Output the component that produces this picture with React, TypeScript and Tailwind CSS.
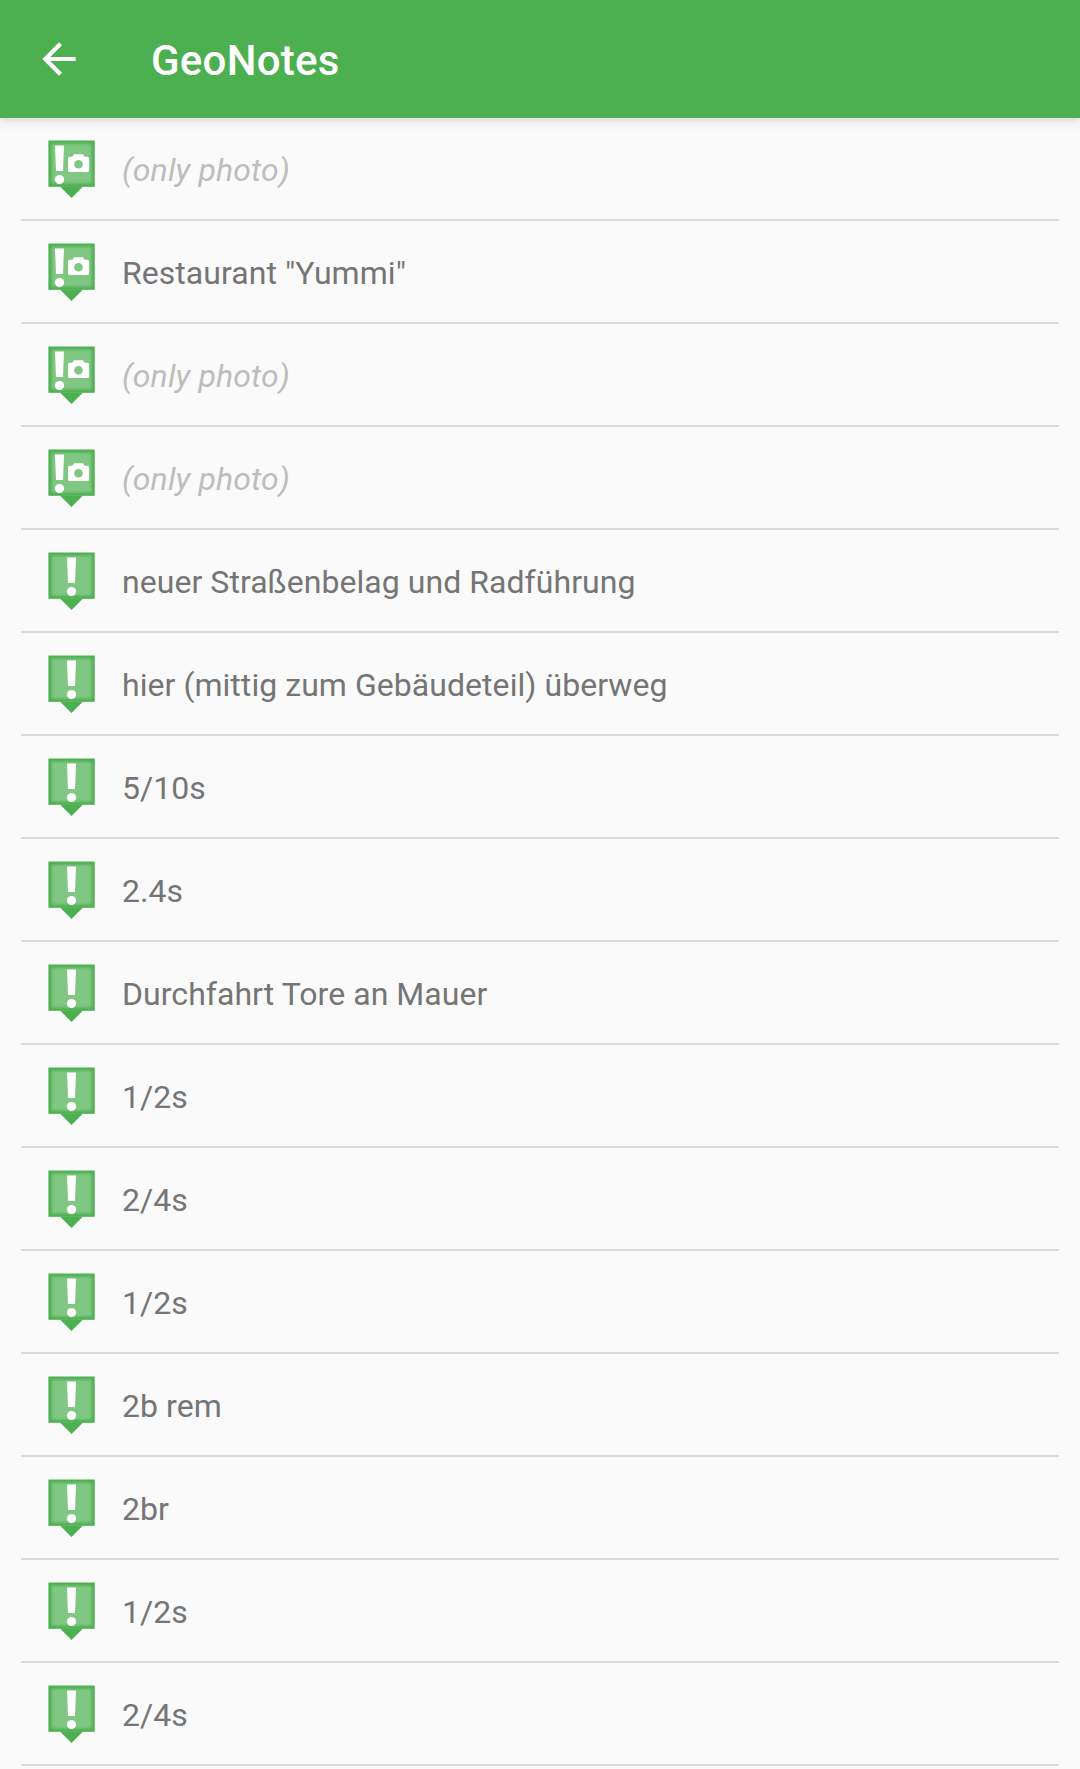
const notes: string[] = [
  "",
  'Restaurant "Yummi"',
  "",
  "",
  "neuer Straßenbelag und Radführung",
  "hier (mittig zum Gebäudeteil) überweg",
  "5/10s",
  "2.4s",
  "Durchfahrt Tore an Mauer",
  "1/2s",
  "2/4s",
  "1/2s",
  "2b rem",
  "2br",
  "1/2s",
  "2/4s",
];

const photoRows = new Set([0, 1, 2, 3]);

function Marker({ photo }: { photo: boolean }) {
  return (
    <svg width="48" height="60" viewBox="0 0 48 60" className="shrink-0">
      <defs>
        <filter id="soft" x="-20%" y="-20%" width="140%" height="140%">
          <feGaussianBlur stdDeviation="1.8" />
        </filter>
        <clipPath id="box">
          <rect x="0.4" y="0.5" width="46.3" height="46.3" />
        </clipPath>
      </defs>
      <rect x="0.4" y="0.5" width="46.3" height="46.3" fill="#4caf50" />
      <path d="M12 46.5H35L23.5 58Z" fill="#4caf50" />
      <g clipPath="url(#box)">
        <rect x="3.6" y="3.6" width="40" height="40" fill="#81c784" filter="url(#soft)" />
      </g>
      <g transform={photo ? "translate(-12 0)" : undefined} fill="#fff">
        <path d="M19 5.4H28L27 31H20Z" />
        <circle cx="23.5" cy="39.5" r="4.6" />
      </g>
      {photo && (
        <>
          <path
            d="M21.7 16.7H24.3L26 14.2H35L36.7 16.7H39.4A1.7 1.7 0 0 1 41.1 18.4V30.4A1.7 1.7 0 0 1 39.4 32.1H21.7A1.7 1.7 0 0 1 20 30.4V18.4A1.7 1.7 0 0 1 21.7 16.7Z"
            fill="#fff"
          />
          <circle cx="30.5" cy="24.2" r="4.3" fill="#81c784" />
        </>
      )}
    </svg>
  );
}

export default function App() {
  return (
    <div className="h-[1769px] w-[1080px] overflow-hidden bg-[#fafafa] font-[Roboto,sans-serif]">
      <header className="relative flex h-[118px] items-center bg-[#4caf50] pl-[34px] text-white shadow-[0_1px_6px_rgba(0,0,0,0.10),0_5px_12px_rgba(0,0,0,0.07)]">
        <svg width="50" height="50" viewBox="0 0 24 24" fill="currentColor">
          <path d="M20 11H7.83l5.59-5.59L12 4l-8 8 8 8 1.41-1.41L7.83 13H20v-2z" />
        </svg>
        <h1 className="ml-[67px] pt-[3px] text-[42px] leading-[50px] font-medium tracking-[0.25px]">GeoNotes</h1>
      </header>
      <ul className="px-[21px]">
        {notes.map((note, i) => (
          <li key={i} className="flex h-[103px] items-start border-b-2 border-[#dcdcdc] pt-[22px] pl-[27px]">
            <Marker photo={photoRows.has(i)} />
            <span
              className={
                note
                  ? "ml-[26px] pt-[11px] text-[32px] leading-[38px] tracking-[0.05px] text-[#757575]"
                  : "ml-[26px] pt-[11px] text-[32px] leading-[38px] tracking-[0.14px] text-[#bdbdbd] italic"
              }
            >
              {note || "(only photo)"}
            </span>
          </li>
        ))}
      </ul>
    </div>
  );
}
